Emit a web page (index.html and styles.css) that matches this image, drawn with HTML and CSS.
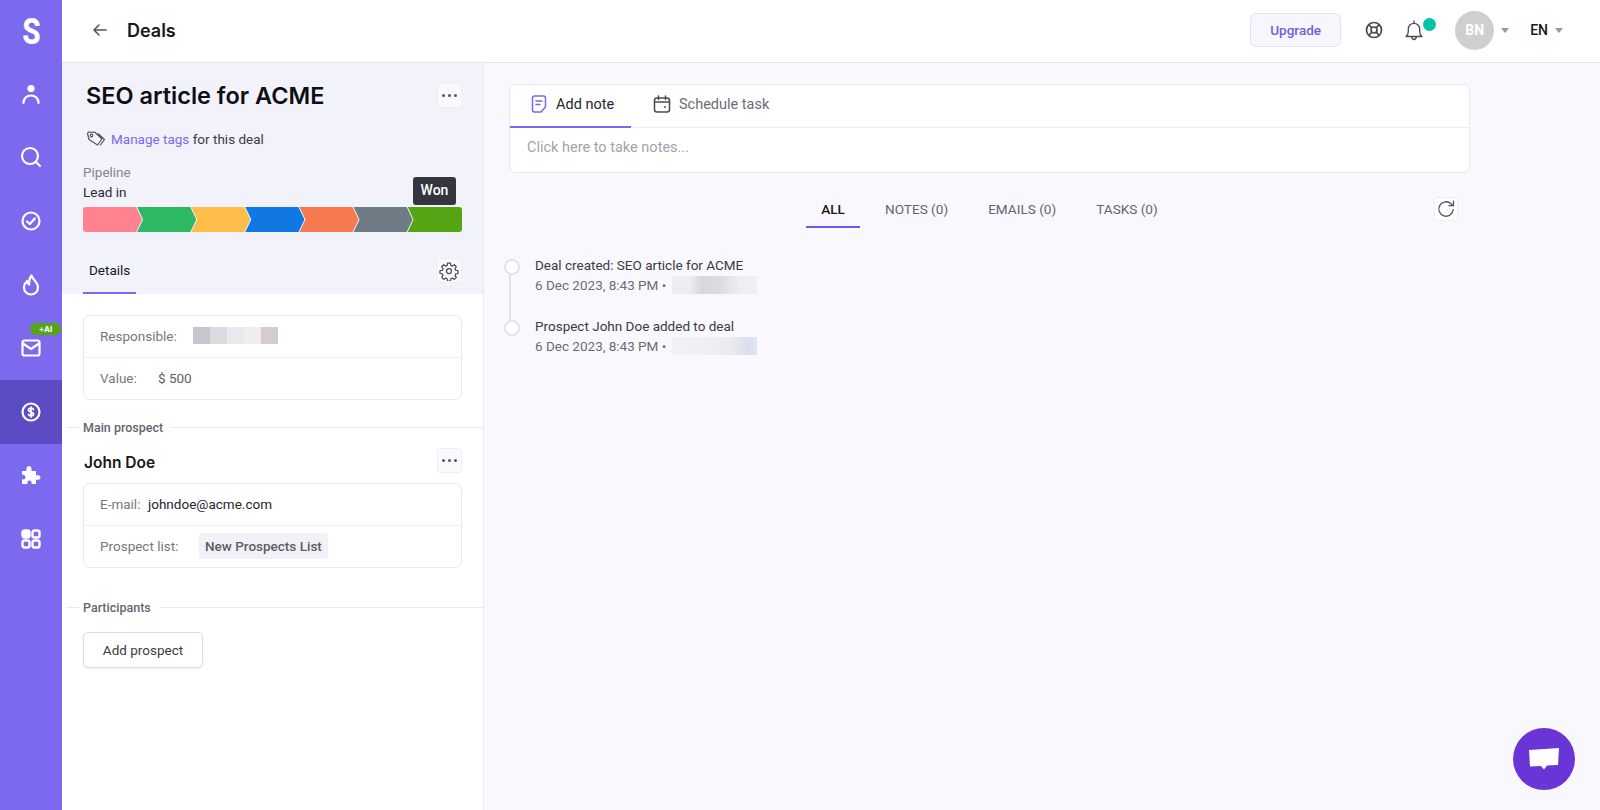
FILE: index.html
```html
<!DOCTYPE html>
<html lang="en">
  <head>
    <meta charset="UTF-8" />
    <meta name="viewport" content="width=device-width, initial-scale=1.0" />
    <title>Deals</title>
    <link rel="stylesheet" href="styles.css">
  </head>
  <body>
    <div class="app">
      <nav class="sidebar">
        <div class="logo"><span>S</span></div>
        <a class="nav-item">
          <svg width="24" height="24" viewBox="0 0 24 24" fill="none" stroke="#fff" stroke-width="2.2" stroke-linecap="round"><circle cx="12" cy="6.5" r="3.6" fill="#fff" stroke="none"/><path d="M4.5 21c0-4.500 3.200-7.500 7.500-7.500s7.500 3 7.500 7.500"/></svg>
        </a>
        <a class="nav-item">
          <svg width="24" height="24" viewBox="0 0 24 24" fill="none" stroke="#fff" stroke-width="2.2" stroke-linecap="round"><circle cx="11" cy="11" r="8"/><path d="M17 17l4 4"/></svg>
        </a>
        <a class="nav-item">
          <svg width="24" height="24" viewBox="0 0 24 24" fill="none" stroke="#fff" stroke-width="2.2" stroke-linecap="round" stroke-linejoin="round"><circle cx="12" cy="12" r="8.500"/><path d="M8 12.500l2.800 2.500 5-5.500"/></svg>
        </a>
        <a class="nav-item">
          <svg width="24" height="24" viewBox="0 0 24 24" fill="none" stroke="#fff" stroke-width="2.2" stroke-linejoin="round"><path d="M12.500 2.500c.5 3.500 6.500 6.500 6.500 12 0 4-3 7-7 7s-7-3-7-7c0-3 1.500-5 3-6.500.3 2 1 3 2.200 3.500C10 8.500 10.500 5 12.500 2.500z"/></svg>
        </a>
        <a class="nav-item">
          <span class="ai-badge">+AI</span>
          <svg width="24" height="24" viewBox="0 0 24 24" fill="none" stroke="#fff" stroke-width="2.2" stroke-linejoin="round" stroke-linecap="round"><rect x="3.500" y="4.500" width="17" height="15" rx="2"/><path d="M4 7.500l8 5.500 8-5.500"/></svg>
        </a>
        <a class="nav-item active">
          <svg width="24" height="24" viewBox="0 0 24 24" fill="none" stroke="#fff" stroke-width="2.2"><circle cx="12" cy="12" r="8.500"/><path stroke-width="1.700" stroke-linecap="round" d="M14.500 9.500c-.5-1-1.400-1.300-2.500-1.300-1.400 0-2.500.7-2.500 1.900 0 2.800 5 1.100 5 3.800 0 1.200-1.100 1.900-2.500 1.900-1.200 0-2.100-.4-2.600-1.400M12 7v10"/></svg>
        </a>
        <a class="nav-item">
          <svg width="24" height="24" viewBox="0 0 24 24" fill="#fff"><path d="M3 8h4.500C7 6.500 7.500 3 10 3s3 3.500 2.500 5H17v4.500c1.500-.5 4.500-.5 4.500 2s-3 2.500-4.500 2V21h-4.500c.4-1.500 0-3.500-2-3.500s-2.400 2-2 3.500H3v-4.800c1.500.5 3.500 0 3.500-2S4.500 11.300 3 11.800V8z"/></svg>
        </a>
        <a class="nav-item">
          <svg width="24" height="24" viewBox="0 0 24 24" fill="none" stroke="#fff" stroke-width="2.4"><rect x="3.500" y="3.500" width="7" height="7" rx="2" fill="#fff"/><rect x="13.500" y="3.500" width="7" height="7" rx="2"/><rect x="3.500" y="13.500" width="7" height="7" rx="2"/><rect x="13.500" y="13.500" width="7" height="7" rx="2"/></svg>
        </a>
      </nav>

      <div class="main">
        <header class="topbar">
          <svg class="back" width="18" height="18" viewBox="0 0 18 18" fill="none" stroke="#555" stroke-width="1.600" stroke-linecap="round" stroke-linejoin="round"><path d="M15 9H3M8 4L3 9l5 5"/></svg>
          <span class="page-title">Deals</span>
          <div class="topbar-right">
            <button class="upgrade">Upgrade</button>
            <svg class="help" width="20" height="20" viewBox="0 0 20 20" fill="none" stroke="#4a4a50" stroke-width="1.700"><circle cx="10" cy="10" r="7.500"/><circle cx="10" cy="10" r="3"/><path d="M4.700 4.700l3.200 3.200M15.300 4.700l-3.200 3.200M4.700 15.300l3.200-3.200M15.300 15.300l-3.200-3.200"/></svg>
            <div class="bell">
              <svg width="22" height="22" viewBox="0 0 22 22" fill="none" stroke="#4a4a50" stroke-width="1.300" stroke-linejoin="round"><path d="M3 17.500c1.500-1.200 2.300-2.500 2.300-5V10c0-3.200 2.500-5.700 5.700-5.700s5.700 2.500 5.700 5.700v2.500c0 2.500.8 3.800 2.300 5H3zM8.800 17.800c0 1.500 1 2.700 2.200 2.700s2.200-1.200 2.200-2.700M11 1.500v2.800"/></svg>
              <span class="bell-dot"></span>
            </div>
            <div class="avatar">BN</div>
            <span class="caret"></span>
            <span class="lang">EN</span>
            <span class="caret"></span>
          </div>
        </header>

        <div class="content">
          <aside class="deal-panel">
            <div class="deal-head">
              <div class="title-row">
                <h1>SEO article for ACME</h1>
                <button class="icon-btn dots"><i></i><i></i><i></i></button>
              </div>
              <div class="tags-row">
                <svg width="20" height="20" viewBox="0 0 20 20" fill="none" stroke="#55555c" stroke-width="1.200" stroke-linejoin="round"><path d="M1.500 4.500l1-1.500 6.500.3 7 6.700-4.500 6-8.500-5.500zM12 4.500l6.500 6-4.500 6"/><circle cx="5.500" cy="6.500" r="1.300"/></svg>
                <span><a class="link">Manage tags</a> for this deal</span>
              </div>
              <div class="pipeline-label">Pipeline</div>
              <div class="pipeline-stage">Lead in</div>
              <div class="pipeline">
                <span class="stage s1"></span>
                <span class="stage s2"></span>
                <span class="stage s3"></span>
                <span class="stage s4"></span>
                <span class="stage s5"></span>
                <span class="stage s6"></span>
                <span class="stage s7"></span>
                <span class="tooltip">Won</span>
              </div>
              <div class="detail-tabs">
                <span class="detail-tab">Details</span>
                <button class="icon-btn gear">
                  <svg width="20" height="20" viewBox="0 0 24 24" fill="none" stroke="#4a4a50" stroke-width="1.500" stroke-linejoin="round"><circle cx="12" cy="12" r="3"/><path d="M10.300 2.500h3.400l.5 2.800 1.900.8 2.300-1.600 2.400 2.400-1.600 2.300.8 1.900 2.800.5v3.400l-2.800.5-.8 1.900 1.600 2.300-2.400 2.400-2.300-1.600-1.900.8-.5 2.800h-3.400l-.5-2.800-1.900-.8-2.300 1.600-2.400-2.400 1.600-2.300-.8-1.900-2.800-.5v-3.400l2.800-.5.8-1.900-1.600-2.300 2.400-2.400 2.300 1.600 1.900-.8z"/></svg>
                </button>
              </div>
            </div>

            <div class="deal-body">
              <div class="card">
                <div class="card-row">
                  <span class="field-label w-resp">Responsible:</span>
                  <span class="blur-name">
                    <i class="b1"></i><i class="b2"></i><i class="b3"></i><i class="b4"></i><i class="b5"></i>
                  </span>
                </div>
                <div class="card-row">
                  <span class="field-label w-value">Value:</span>
                  <span class="field-value">$ 500</span>
                </div>
              </div>

              <div class="section-title main-prospect">Main prospect</div>

              <div class="prospect-row">
                <span class="prospect-name">John Doe</span>
                <button class="icon-btn dots"><i></i><i></i><i></i></button>
              </div>

              <div class="card">
                <div class="card-row">
                  <span class="field-label w-email">E-mail:</span>
                  <span class="field-value dark">johndoe@acme.com</span>
                </div>
                <div class="card-row">
                  <span class="field-label w-list">Prospect list:</span>
                  <span class="chip">New Prospects List</span>
                </div>
              </div>

              <div class="section-title participants">Participants</div>
              <button class="add-prospect">Add prospect</button>
            </div>
          </aside>

          <section class="activity">
            <div class="note-card">
              <div class="note-tabs">
                <div class="note-tab active">
                  <svg width="20" height="20" viewBox="0 0 20 20" fill="none" stroke="#7b68ee" stroke-width="1.500" stroke-linejoin="round" stroke-linecap="round"><path d="M3.500 4a2 2 0 0 1 2-2h9a2 2 0 0 1 2 2v9l-4.500 5h-6.500a2 2 0 0 1-2-2z"/><path d="M7 7h6M7 10.500h4"/></svg>
                  Add note
                </div>
                <div class="note-tab">
                  <svg width="20" height="20" viewBox="0 0 20 20" fill="none" stroke="#4a4a50" stroke-width="1.500" stroke-linecap="round"><rect x="2.500" y="4" width="15" height="14" rx="2.500"/><path d="M2.500 8h15M6.500 2v3.500M13.500 2v3.500"/><circle cx="13" cy="13" r="1" fill="#4a4a50" stroke="none"/></svg>
                  Schedule task
                </div>
              </div>
              <div class="note-input">Click here to take notes...</div>
            </div>

            <div class="filter-bar">
              <div class="filter-tabs">
                <span class="filter-tab active">ALL</span>
                <span class="filter-tab">NOTES (0)</span>
                <span class="filter-tab">EMAILS (0)</span>
                <span class="filter-tab">TASKS (0)</span>
              </div>
              <button class="icon-btn refresh">
                <svg width="20" height="20" viewBox="0 0 18 18" fill="none" stroke="#55555c" stroke-width="1.200" stroke-linecap="round" stroke-linejoin="round"><path d="M15.500 9.500a6.500 6.500 0 1 1-2-5.200l2 1.700"/><path d="M15.700 2v4h-4"/></svg>
              </button>
            </div>

            <ul class="timeline">
              <li class="event">
                <div class="event-title">Deal created: SEO article for ACME</div>
                <div class="event-meta">6 Dec 2023, 8:43 PM &bull; <span class="blur-user u1"></span></div>
              </li>
              <li class="event">
                <div class="event-title">Prospect John Doe added to deal</div>
                <div class="event-meta">6 Dec 2023, 8:43 PM &bull; <span class="blur-user u2"></span></div>
              </li>
            </ul>
          </section>
        </div>
      </div>
    </div>

    <button class="chat">
      <svg width="36" height="30" viewBox="0 0 36 30" fill="#fff"><path d="M3 6l30-2-1 17-11 .5-3 4-3-3.500-11 .5z"/></svg>
    </button>
  </body>
</html>
```

FILE: styles.css
```css
* {
  box-sizing: border-box;
}

body {
  margin: 0;
  height: 810px;
  overflow: hidden;
  font-family: Roboto, Arial, sans-serif;
  font-size: 13.5px;
  color: #3b3b42;
  background-color: #f9f8ff;
}

button {
  font-family: inherit;
  cursor: pointer;
}

.app {
  display: flex;
  height: 810px;
}

/* left nav */
.sidebar {
  width: 62px;
  flex-shrink: 0;
  background-color: #7b69ee;
}

.logo {
  height: 62px;
  display: flex;
  align-items: center;
  justify-content: center;
  color: white;
  font-size: 37px;
  font-weight: 800;
}

.logo span {
  transform: scaleX(0.8);
}

.nav-item {
  position: relative;
  height: 63.6px;
  display: flex;
  align-items: center;
  justify-content: center;
}

.nav-item.active {
  background-color: #5c4cc4;
}

.ai-badge {
  position: absolute;
  top: 7px;
  left: 30px;
  width: 31px;
  height: 12px;
  border-radius: 6px;
  background-color: #55a414;
  color: white;
  font-family: Inter, sans-serif;
  font-size: 8px;
  font-weight: 700;
  line-height: 12px;
  text-align: center;
}

.main {
  flex: 1;
  min-width: 0;
  display: flex;
  flex-direction: column;
}

/* top bar */
.topbar {
  height: 63px;
  flex-shrink: 0;
  display: flex;
  align-items: center;
  padding: 0 37px 2px 29px;
  background-color: white;
  border-bottom: 1px solid #e6e5ee;
}

.page-title {
  margin-left: 18px;
  font-family: Inter, sans-serif;
  font-size: 18px;
  font-weight: 600;
  color: #17171c;
}

.topbar-right {
  margin-left: auto;
  display: flex;
  align-items: center;
}

.upgrade {
  width: 91px;
  height: 34px;
  background-color: #f7f6fe;
  border: 1px solid #e4e3ec;
  border-radius: 6px;
  color: #6f5fdc;
  font-size: 13.5px;
  font-weight: 500;
}

.help {
  margin-left: 23px;
}

.bell {
  position: relative;
  margin-left: 19px;
  width: 22px;
  height: 22px;
}

.bell-dot {
  position: absolute;
  top: -1px;
  left: 20px;
  width: 13px;
  height: 13px;
  border-radius: 50%;
  background-color: #00c4a5;
}

.avatar {
  margin-left: 30px;
  width: 39px;
  height: 39px;
  border-radius: 50%;
  background-color: #cfcfcf;
  color: white;
  font-size: 14px;
  font-weight: 700;
  line-height: 39px;
  text-align: center;
}

.caret {
  margin-left: 7px;
  width: 0;
  height: 0;
  border-left: 4.5px solid transparent;
  border-right: 4.5px solid transparent;
  border-top: 5px solid #97979d;
}

.lang {
  margin-left: 21px;
  font-size: 14px;
  font-weight: 500;
  color: #17171c;
}

.content {
  flex: 1;
  min-height: 0;
  display: flex;
}

/* deal panel */
.deal-panel {
  width: 422px;
  flex-shrink: 0;
  background-color: white;
  border-right: 1px solid #e9e8f0;
}

.deal-head {
  height: 231px;
  padding: 0 21px;
  background-color: #f2f2fb;
}

.title-row {
  height: 64px;
  display: flex;
  align-items: center;
  justify-content: space-between;
  padding-left: 3px;
}

h1 {
  margin: 0;
  font-family: Inter, sans-serif;
  font-size: 23.5px;
  font-weight: 600;
  color: #0e0e12;
}

.icon-btn {
  width: 25px;
  height: 25px;
  padding: 0;
  display: flex;
  align-items: center;
  justify-content: center;
  background-color: #fafafe;
  border: 1px solid #eeeef4;
  border-radius: 3px;
}

.dots {
  gap: 3px;
}

.dots i {
  width: 3px;
  height: 3px;
  border-radius: 50%;
  background-color: #55555c;
}

.tags-row {
  height: 24px;
  display: flex;
  align-items: center;
  padding-left: 3px;
  color: #3b3b42;
}

.tags-row svg {
  margin-right: 5px;
}

.link {
  color: #7b69ee;
}

.pipeline-label {
  margin-top: 11px;
  height: 20px;
  line-height: 20px;
  color: #85858c;
}

.pipeline-stage {
  height: 20px;
  line-height: 20px;
  color: #2a2a30;
}

.pipeline {
  position: relative;
  margin-top: 5px;
  height: 25px;
  display: flex;
}

.stage {
  flex: 1;
  margin-left: -5px;
  clip-path: polygon(0 0, calc(100% - 6px) 0, 100% 50%, calc(100% - 6px) 100%, 0 100%, 6px 50%);
}

.stage.s1 {
  margin-left: 0;
  clip-path: polygon(0 0, calc(100% - 6px) 0, 100% 50%, calc(100% - 6px) 100%, 0 100%);
  border-radius: 3px 0 0 3px;
  background-color: #ff8290;
}

.s2 { background-color: #2fb863; }
.s3 { background-color: #ffbd4a; }
.s4 { background-color: #0f78e3; }
.s5 { background-color: #f87850; }
.s6 { background-color: #6f7b85; }

.stage.s7 {
  flex: 0.92;
  clip-path: polygon(0 0, 100% 0, 100% 100%, 0 100%, 6px 50%);
  border-radius: 0 3px 3px 0;
  background-color: #55a414;
}

.tooltip {
  position: absolute;
  right: 6px;
  top: -30px;
  width: 43px;
  height: 28px;
  background-color: #35353e;
  border-radius: 3px;
  color: white;
  font-size: 14px;
  font-weight: 500;
  line-height: 27px;
  text-align: center;
}

.detail-tabs {
  margin-top: 27px;
  display: flex;
  align-items: flex-start;
  justify-content: space-between;
}

.detail-tab {
  width: 53px;
  height: 35px;
  padding: 1px 0 0 6px;
  border-bottom: 2px solid #7b69ee;
  line-height: 20px;
  color: #17171c;
}

.gear {
  margin-top: -1px;
  padding-right: 2px;
}

.deal-body {
  padding: 21px 21px 0;
}

.card {
  height: 85px;
  display: flex;
  flex-direction: column;
  background-color: white;
  border: 1px solid #e9e8ef;
  border-radius: 7px;
}

.card-row {
  flex: 1;
  display: flex;
  align-items: center;
  padding: 0 0 2px 16px;
}

.card-row + .card-row {
  border-top: 1px solid #efeef4;
}

.field-label {
  color: #77777e;
}

.w-resp { width: 93px; }
.w-value { width: 58px; }
.w-email { width: 48px; }
.w-list { width: 99px; }

.field-value {
  color: #5c5c66;
}

.field-value.dark {
  color: #26262c;
}

.blur-name {
  display: flex;
  height: 17px;
}

.blur-name i {
  width: 17px;
}

.b1 { background-color: #c7c6cc; }
.b2 { background-color: #dbdadf; }
.b3 { background-color: #e9e8ec; }
.b4 { background-color: #f1ecef; }
.b5 { background-color: #d3cdd0; }

.section-title {
  position: relative;
  margin: 0 -21px;
  padding: 0 21px;
  display: flex;
  align-items: center;
  gap: 8px;
  height: 20px;
  font-size: 12.5px;
  font-weight: 500;
  color: #65656e;
}

.section-title::before {
  content: "";
  position: absolute;
  left: 4px;
  width: 13px;
  border-top: 1px solid #ebeaf1;
}

.section-title::after {
  content: "";
  flex: 1;
  margin-right: -21px;
  border-top: 1px solid #ebeaf1;
}

.main-prospect {
  margin-top: 17px;
}

.prospect-row {
  height: 25px;
  margin: 11px 0 10px;
  display: flex;
  align-items: center;
  justify-content: space-between;
  padding-left: 1px;
}

.prospect-name {
  padding-top: 3px;
  font-family: Inter, sans-serif;
  font-size: 15.5px;
  font-weight: 600;
  color: #17171c;
}

.chip {
  padding: 0 6px;
  height: 26px;
  background-color: #f1f1f7;
  border-radius: 3px;
  color: #5c5c66;
  font-weight: 500;
  line-height: 26px;
}

.participants {
  margin-top: 29px;
}

.add-prospect {
  display: block;
  margin-top: 15px;
  width: 120px;
  height: 36px;
  background-color: white;
  border: 1px solid #dddce6;
  border-radius: 5px;
  box-shadow: 0 1px 2px #eeeef4;
  color: #3b3b42;
  font-size: 13.5px;
}

/* activity column */
.activity {
  flex: 1;
  min-width: 0;
  padding: 21px 0 0 25px;
}

.note-card {
  width: 961px;
  height: 89px;
  background-color: white;
  border: 1px solid #e9e8ef;
  border-radius: 6px;
}

.note-tabs {
  height: 43px;
  display: flex;
  border-bottom: 1px solid #eeedf4;
}

.note-tab {
  height: 43px;
  width: 121px;
  display: flex;
  align-items: center;
  gap: 7px;
  padding: 0 0 5px 19px;
  font-size: 14.5px;
  color: #6c6c75;
}

.note-tab + .note-tab {
  width: auto;
  padding-left: 21px;
}

.note-tab.active {
  border-bottom: 2px solid #7b69ee;
  padding-bottom: 3px;
  color: #26262c;
}

.note-input {
  padding: 11px 17px;
  font-size: 14.5px;
  line-height: 18px;
  color: #a3a3aa;
}

.filter-bar {
  width: 961px;
  margin-top: 24px;
  display: grid;
  grid-template-columns: 1fr auto 1fr;
  align-items: start;
  padding-right: 12px;
}

.filter-tabs {
  grid-column: 2;
  display: flex;
  gap: 10px;
  margin-left: 12px;
}

.filter-tab {
  height: 31px;
  padding: 3px 15px 0;
  font-size: 13.6px;
  line-height: 18px;
  color: #65656e;
}

.filter-tab.active {
  border-bottom: 2px solid #6a57f0;
  font-weight: 500;
  color: #17171c;
}

.refresh {
  grid-column: 3;
  justify-self: end;
  width: 24px;
  height: 24px;
  background-color: white;
}

.timeline {
  position: relative;
  margin: 27px 0 0;
  padding: 0 0 0 26px;
  list-style: none;
}

.event {
  position: relative;
  height: 61px;
}

.event::before {
  content: "";
  position: absolute;
  left: -31px;
  top: 4px;
  width: 12px;
  height: 12px;
  border: 2px solid #e4e3ec;
  border-radius: 50%;
  background-color: white;
  z-index: 1;
}

.event:first-child::after {
  content: "";
  position: absolute;
  left: -26px;
  top: 10px;
  height: 60px;
  border-left: 2px solid #e4e3ec;
}

.event-title {
  height: 20px;
  line-height: 20px;
  color: #3b3b42;
}

.event-meta {
  height: 20px;
  display: flex;
  align-items: center;
  gap: 2px;
  white-space: pre;
  color: #6d6d75;
}

.blur-user {
  width: 85px;
  height: 18px;
}

.u1 {
  background: linear-gradient(90deg, #eeedf3 0%, #eeedf3 20%, #d8d7dd 35%, #dcdbe0 55%, #eeedf3 80%, #f0eff5 100%);
}

.u2 {
  background: linear-gradient(90deg, #f1f0f6 0%, #eeeef4 50%, #e9e9f0 70%, #d9dff1 90%, #e2e6f3 100%);
}

/* chat bubble */
.chat {
  position: fixed;
  right: 25px;
  bottom: 20px;
  width: 62px;
  height: 62px;
  padding: 0;
  display: flex;
  align-items: center;
  justify-content: center;
  background-color: #6a35d6;
  border: none;
  border-radius: 50%;
}
```
